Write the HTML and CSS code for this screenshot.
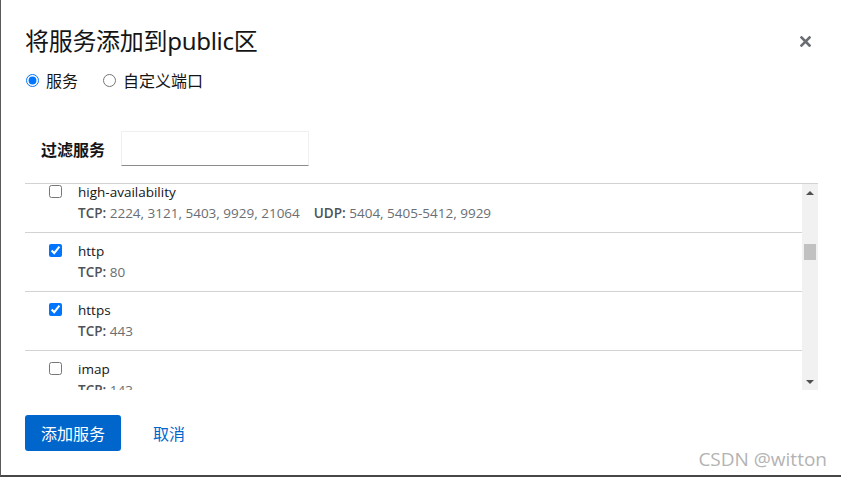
FILE: index.html
```html
<!DOCTYPE html>
<html lang="zh">
<head>
<meta charset="utf-8">
<title>将服务添加到public区</title>
<link rel="stylesheet" href="styles.css">
</head>
<body>
<div class="screen">
  <div class="dialog">
    <header class="header">
      <h1 class="title">将服务添加到public区</h1>
      <button class="close" aria-label="关闭">
        <svg width="11" height="11" viewBox="0 0 11 11"><path d="M1.5 1.5 L9.5 9.5 M9.5 1.5 L1.5 9.5" stroke="#6a6e73" stroke-width="2.6" stroke-linecap="square"/></svg>
      </button>
    </header>
    <div class="radios">
      <label class="radio"><input type="radio" name="kind" checked><span>服务</span></label>
      <label class="radio"><input type="radio" name="kind"><span>自定义端口</span></label>
    </div>
    <div class="filter">
      <span class="filter-label">过滤服务</span>
      <input class="filter-input" type="text">
    </div>
    <div class="list">
      <div class="viewport">
        <div class="rows">
          <div class="row">
            <input type="checkbox" class="cb">
            <div class="info">
              <div class="name">high-availability</div>
              <div class="ports"><b>TCP:</b> 2224, 3121, 5403, 9929, 21064<b class="udp">UDP:</b> 5404, 5405-5412, 9929</div>
            </div>
          </div>
          <div class="row">
            <input type="checkbox" class="cb" checked>
            <div class="info">
              <div class="name">http</div>
              <div class="ports"><b>TCP:</b> 80</div>
            </div>
          </div>
          <div class="row">
            <input type="checkbox" class="cb" checked>
            <div class="info">
              <div class="name">https</div>
              <div class="ports"><b>TCP:</b> 443</div>
            </div>
          </div>
          <div class="row">
            <input type="checkbox" class="cb">
            <div class="info">
              <div class="name">imap</div>
              <div class="ports"><b>TCP:</b> 143</div>
            </div>
          </div>
        </div>
      </div>
      <div class="scrollbar">
        <div class="arrow up"></div>
        <div class="track"><div class="thumb"></div></div>
        <div class="arrow down"></div>
      </div>
    </div>
    <footer class="footer">
      <button class="btn-primary">添加服务</button>
      <button class="btn-link">取消</button>
    </footer>
  </div>
  <div class="watermark">CSDN @witton</div>
</div>
</body>
</html>
```
FILE: styles.css
```css
* { box-sizing: border-box; }
html, body { margin: 0; padding: 0; background: #fff; }
body {
  font-family: "Open Sans", "Noto Sans", "Noto Sans CJK SC", sans-serif;
  color: #151515;
}
.screen {
  position: relative;
  width: 841px;
  height: 477px;
  border-left: 1px solid #5a5a5a;
  border-bottom: 2px solid #474747;
  overflow: hidden;
}
.dialog {
  padding: 25px 24px 0 24px;
}
.header {
  display: flex;
  align-items: center;
  justify-content: space-between;
  height: 32px;
}
.title {
  margin: 0;
  font-size: 24px;
  font-weight: 400;
  line-height: 32px;
  font-family: "Noto Sans", "Noto Sans CJK SC", sans-serif;
  letter-spacing: -0.3px;
}
.close {
  border: 0;
  background: none;
  padding: 0;
  margin-right: 6px;
  width: 11px;
  height: 11px;
  display: flex;
}
.radios {
  display: flex;
  gap: 24px;
  margin-top: 13px;
  height: 20px;
  align-items: center;
}
.radio {
  display: flex;
  align-items: center;
  gap: 7px;
  font-size: 16px;
  font-family: "Noto Sans CJK SC", sans-serif;
}
.radio input {
  margin: 0 0 0 1px;
  width: 13px;
  height: 13px;
}
.filter {
  display: flex;
  align-items: center;
  gap: 16px;
  margin-top: 41px;
  padding-left: 16px;
}
.filter-label {
  font-size: 16px;
  font-weight: 700;
  font-family: "Noto Sans CJK SC", sans-serif;
  width: 64px;
}
.filter-input {
  width: 188px;
  height: 35px;
  border: 1px solid #f0f0f0;
  border-bottom: 1px solid #8a8d90;
  outline: none;
  margin: 0;
}
.list {
  display: flex;
  margin-top: 17px;
  width: 793px;
  height: 207px;
  border-top: 1px solid #d2d2d2;
}
.viewport {
  flex: 1;
  overflow: hidden;
}
.rows {
  margin-top: -10px;
}
.row {
  display: flex;
  align-items: flex-start;
  gap: 16px;
  padding: 8px 0 10px 24px;
  border-top: 1px solid #d2d2d2;
  height: 59px;
}
.row:first-child { border-top: 0; height: 58px; }
.cb {
  margin: 3px 0 0 0;
  width: 13px;
  height: 13px;
}
.info { font-size: 13.5px; line-height: 20px; }
.name { color: #151515; }
.ports { color: #6a6e73; margin-top: 1px; }
.ports b { color: #4f5255; font-weight: 600; }
.ports .udp { margin-left: 14px; }
.scrollbar {
  width: 16px;
  background: #f1f1f1;
  display: flex;
  flex-direction: column;
}
.arrow {
  height: 17px;
  display: flex;
  align-items: center;
  justify-content: center;
}
.arrow::before {
  content: "";
  border-left: 4px solid transparent;
  border-right: 4px solid transparent;
}
.up::before { border-bottom: 4px solid #505050; }
.down::before { border-top: 4px solid #505050; }
.track { flex: 1; padding: 43px 2px 0 2px; }
.thumb { height: 16px; background: #c1c1c1; }
.footer {
  display: flex;
  align-items: center;
  gap: 16px;
  margin-top: 25px;
}
.btn-primary {
  width: 96px;
  height: 36px;
  background: #0066cc;
  color: #fff;
  border: 0;
  border-radius: 3px;
  font-size: 16px;
  font-family: "Noto Sans CJK SC", sans-serif;
  padding: 0;
}
.btn-link {
  background: none;
  border: 0;
  color: #0066cc;
  font-size: 16px;
  font-family: "Noto Sans CJK SC", sans-serif;
  padding: 0 16px;
}
.watermark {
  position: absolute;
  right: 14px;
  bottom: 3px;
  font-size: 19px;
  color: #b3b3b3;
  font-family: "Open Sans", sans-serif;
}
```
